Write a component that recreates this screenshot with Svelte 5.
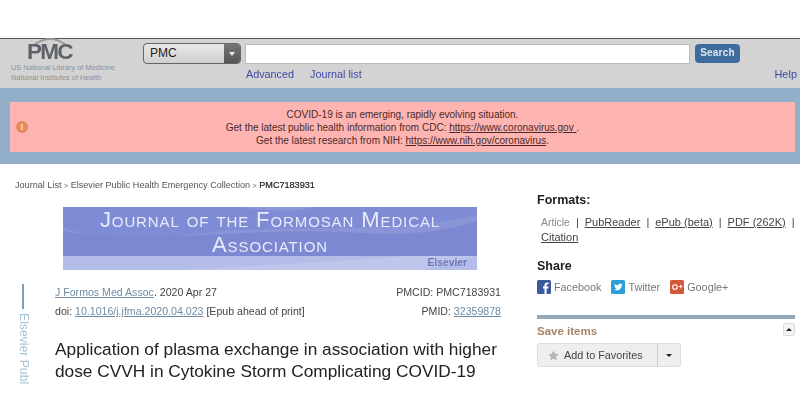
<script lang="ts">
  const formats = ["PubReader", "ePub (beta)", "PDF (262K)"];
</script>

<div class="page">
  <header class="topbar">
    <div class="brand">
      <div class="logo">
        <svg class="roof" width="44" height="12" viewBox="0 0 44 12" aria-hidden="true">
          <path d="M7 6 Q15 1 22 1 Q29 1 37 6" fill="none" stroke="#999" stroke-width="2" />
        </svg>
        <span class="logo-text">PMC</span>
      </div>
      <div class="nlm">US National Library of Medicine</div>
      <div class="nlm">National Institutes of Health</div>
    </div>
    <div class="search">
      <div class="search-row">
        <div class="select">
          <span class="select-label">PMC</span>
          <span class="select-arrow"><i></i></span>
        </div>
        <div class="input"></div>
        <div class="search-btn">Search</div>
      </div>
      <div class="links">
        <span>Advanced</span>
        <span>Journal list</span>
      </div>
    </div>
    <div class="help">Help</div>
  </header>

  <section class="band">
    <div class="alert">
      <span class="alert-icon">!</span>
      <div class="alert-text">
        <div>COVID-19 is an emerging, rapidly evolving situation.</div>
        <div>Get the latest public health information from CDC: <u>https://www.coronavirus.gov&nbsp;</u>.</div>
        <div>Get the latest research from NIH: <u>https://www.nih.gov/coronavirus</u>.</div>
      </div>
    </div>
  </section>

  <main class="content">
    <div class="left">
      <div class="crumbs">Journal List <small>&gt;</small> Elsevier Public Health Emergency Collection <small>&gt;</small> <b>PMC7183931</b></div>
      <div class="banner">
        <svg class="swoosh" viewBox="0 0 414 63" preserveAspectRatio="none" aria-hidden="true">
          <path d="M0 0 H414 V8 C320 30 200 14 110 30 C70 36 30 32 0 20 Z" fill="#7f8bd4" />
          <path d="M0 24 C80 40 190 18 300 26 C350 30 390 22 414 14 V49 H0 Z" fill="#7d88d2" />
          <path d="M180 0 C210 6 240 4 250 0 Z" fill="#8c97da" />
          <path d="M0 49 H414 V63 H0 Z" fill="#b4bce8" />
          <path d="M120 63 C200 58 290 54 340 49 H414 L360 63 Z" fill="#bfc6ec" />
        </svg>
        <div class="banner-title">Journal of the Formosan Medical<br />Association</div>
        <div class="banner-pub">Elsevier</div>
      </div>
      <div class="article">
        <aside class="side">
          <span class="side-bar"></span>
          <span class="side-text">Elsevier Publ</span>
        </aside>
        <div class="body">
          <div class="meta">
            <div><u>J Formos Med Assoc</u>. 2020 Apr 27</div>
            <div>PMCID: PMC7183931</div>
          </div>
          <div class="meta">
            <div>doi: <u>10.1016/j.jfma.2020.04.023</u> [Epub ahead of print]</div>
            <div>PMID: <u>32359878</u></div>
          </div>
          <h1>Application of plasma exchange in association with higher dose CVVH in Cytokine Storm Complicating COVID-19</h1>
        </div>
      </div>
    </div>

    <div class="right">
      <h2>Formats:</h2>
      <div class="formats">
        <span class="current">Article</span><span class="sep">|</span>{#each formats as label}<u>{label}</u><span class="sep">|</span>{/each}<br /><u>Citation</u>
      </div>
      <h2 class="share-title">Share</h2>
      <div class="share">
        <span class="share-item">
          <svg width="14" height="14" viewBox="0 0 14 14" aria-hidden="true">
            <rect width="14" height="14" rx="1.5" fill="#3a5a9b" />
            <path d="M9.6 14V8.6h1.6l.3-2H9.6V5.3c0-.6.2-1 1-1h1V2.5c-.3 0-.9-.1-1.5-.1-1.6 0-2.6 1-2.6 2.7v1.500H6v2h1.500V14z" fill="#fff" />
          </svg>
          Facebook
        </span>
        <span class="share-item">
          <svg width="14" height="14" viewBox="0 0 14 14" aria-hidden="true">
            <rect width="14" height="14" rx="1.5" fill="#2b9fd6" />
            <path d="M11.5 4.2c-.3.2-.7.3-1 .3.4-.2.6-.5.8-.9-.3.2-.7.3-1.1.4a1.700 1.700 0 0 0-2.900 1.500C5.900 5.400 4.700 4.800 3.800 3.800c-.5.8-.2 1.800.5 2.300-.3 0-.5-.1-.8-.2 0 .8.6 1.500 1.400 1.700-.3.1-.5.1-.8 0 .2.7.9 1.200 1.600 1.200-.7.5-1.600.8-2.500.7.8.5 1.700.8 2.600.8 3.200 0 5-2.700 4.900-5.100.3-.3.6-.6.8-1z" fill="#fff" />
          </svg>
          Twitter
        </span>
        <span class="share-item">
          <svg width="14" height="14" viewBox="0 0 14 14" aria-hidden="true">
            <rect width="14" height="14" rx="1.5" fill="#d4573a" />
            <circle cx="5" cy="7" r="2.3" fill="none" stroke="#fff" stroke-width="1.1" />
            <path d="M9 6.5h3.500M10.750 4.700v3.600" stroke="#fff" stroke-width="1" />
          </svg>
          Google+
        </span>
      </div>
      <div class="save">
        <div class="save-head">
          <span class="save-title">Save items</span>
          <span class="collapse"><i></i></span>
        </div>
        <div class="fav">
          <span class="fav-main">
            <svg width="11" height="11" viewBox="0 0 24 24" aria-hidden="true">
              <path d="M12 1l3.400 7.400 8 .9-6 5.400 1.700 8L12 18.700 4.900 22.700l1.700-8-6-5.400 8-.9z" fill="#b5b5b5" />
            </svg>
            Add to Favorites
          </span>
          <span class="fav-more"><i></i></span>
        </div>
      </div>
    </div>
  </main>
</div>

<style>
  :global(body) {
    margin: 0;
    background: #fff;
  }

  .page {
    width: 800px;
    height: 420px;
    overflow: hidden;
    padding-top: 38px;
    box-sizing: border-box;
    font-family: "Liberation Sans", Arial, sans-serif;
    color: #333;
    filter: blur(0.55px);
  }

  .topbar {
    display: flex;
    height: 50px;
    box-sizing: border-box;
    border-top: 1px solid #555;
    background: #d3d3d3;
  }

  .brand {
    width: 143px;
    padding-left: 11px;
    box-sizing: border-box;
    flex: none;
  }

  .logo {
    position: relative;
    width: 46px;
    margin-left: 16px;
    height: 24px;
  }

  .roof {
    position: absolute;
    left: 1px;
    top: -1px;
  }

  .logo-text {
    position: absolute;
    left: 0;
    top: 2px;
    font-size: 22.5px;
    line-height: 22px;
    font-weight: 700;
    letter-spacing: -1.7px;
    color: #5f6268;
  }

  .nlm {
    font-size: 7.4px;
    line-height: 10px;
    color: #8d9097;
    white-space: nowrap;
  }

  .search {
    flex: none;
    width: 600px;
  }

  .search-row {
    display: flex;
    align-items: center;
    padding-top: 4px;
    height: 21px;
  }

  .select {
    display: flex;
    width: 98px;
    height: 21px;
    box-sizing: border-box;
    border: 1px solid #666;
    border-radius: 4px;
    overflow: hidden;
    background: linear-gradient(#e8e8e8, #d0d0d0);
  }

  .select-label {
    flex: 1;
    padding-left: 6px;
    font-size: 12px;
    line-height: 19px;
    color: #222;
  }

  .select-arrow {
    display: flex;
    align-items: center;
    justify-content: center;
    width: 16px;
    background: linear-gradient(#777, #555);
  }

  .select-arrow i {
    border: 3px solid transparent;
    border-top: 4px solid #eee;
    border-bottom: 0;
  }

  .input {
    width: 445px;
    height: 20px;
    margin-left: 4px;
    border: 1px solid #bbb;
    background: #fff;
    box-sizing: border-box;
  }

  .search-btn {
    width: 45px;
    height: 19px;
    margin-left: 5px;
    border-radius: 4px;
    background: #3f6c9f;
    color: #dfe8f0;
    font-size: 10px;
    font-weight: 700;
    line-height: 18px;
    text-align: center;
    letter-spacing: 0.2px;
  }

  .links {
    display: flex;
    gap: 16px;
    padding: 4px 0 0 103px;
    font-size: 10.8px;
    line-height: 13px;
    color: #3d4aa5;
  }

  .help {
    margin-left: auto;
    padding: 28px 3px 0 0;
    font-size: 11px;
    line-height: 14px;
    color: #3d4aa5;
  }

  .band {
    height: 76px;
    padding: 14px 5px 12px 10px;
    box-sizing: border-box;
    background: #93aec9;
  }

  .alert {
    position: relative;
    height: 50px;
    background: #feb4b0;
    font-size: 10px;
    line-height: 13px;
    color: #4b2a2a;
    text-align: center;
    display: flex;
    align-items: center;
    justify-content: center;
  }

  .alert-text {
    width: 100%;
  }

  .alert-icon {
    position: absolute;
    left: 6px;
    top: 19px;
    width: 12px;
    height: 12px;
    border-radius: 50%;
    background: #e58a5c;
    color: #fbe6da;
    font-size: 9px;
    line-height: 12px;
    font-weight: 700;
    text-align: center;
  }

  .content {
    display: flex;
  }

  .left {
    width: 537px;
    flex: none;
  }

  .crumbs {
    padding: 15px 0 0 15px;
    font-size: 9.1px;
    line-height: 12px;
    color: #555;
    white-space: nowrap;
  }

  .crumbs small {
    font-size: 7px;
  }

  .crumbs b {
    font-weight: 400;
    color: #222;
    -webkit-text-stroke: 0.2px #222;
  }

  .banner {
    position: relative;
    width: 414px;
    height: 63px;
    margin: 15px 0 0 63px;
    background: #8a95d8;
    overflow: hidden;
    color: #e8ebfa;
  }

  .swoosh {
    position: absolute;
    inset: 0;
    width: 100%;
    height: 100%;
  }

  .banner-title {
    position: relative;
    font-size: 22px;
    line-height: 25px;
    font-variant: small-caps;
    text-align: center;
    letter-spacing: 0.9px;
    white-space: nowrap;
  }

  .banner-pub {
    position: absolute;
    right: 10px;
    bottom: 2px;
    font-size: 10.3px;
    line-height: 11px;
    font-weight: 700;
    color: #6f79b8;
  }

  .article {
    display: flex;
    padding-top: 13px;
  }

  .side {
    width: 55px;
    flex: none;
    display: flex;
    flex-direction: column;
    align-items: flex-start;
    padding: 1px 0 0 22px;
    box-sizing: border-box;
  }

  .side-bar {
    width: 2px;
    height: 25px;
    background: #7d9fba;
  }

  .side-text {
    margin: 4px 0 0 -3px;
    writing-mode: vertical-rl;
    font-size: 12.2px;
    line-height: 10px;
    color: #a9c4d4;
    white-space: nowrap;
  }

  .body {
    width: 446px;
    flex: none;
  }

  .meta {
    display: flex;
    justify-content: space-between;
    font-size: 10.6px;
    line-height: 19px;
    color: #444;
    white-space: nowrap;
  }

  .meta u {
    color: #6f8ba3;
  }

  h1 {
    margin: 17px 0 0;
    font-size: 17.3px;
    line-height: 22px;
    font-weight: 400;
    color: #222;
  }

  .right {
    flex: 1;
    min-width: 0;
    padding-top: 28px;
  }

  h2 {
    margin: 0;
    font-size: 12.5px;
    line-height: 17px;
    font-weight: 700;
    color: #222;
  }

  .formats {
    margin-top: 6px;
    padding-left: 4px;
    font-size: 11px;
    line-height: 15px;
    color: #444;
    white-space: nowrap;
  }

  .current {
    font-size: 10.4px;
    color: #888;
  }

  .sep {
    margin: 0 6px;
  }

  .share-title {
    margin-top: 13px;
  }

  .share {
    display: flex;
    gap: 10px;
    margin-top: 5px;
    font-size: 10.8px;
    line-height: 14px;
    color: #777;
  }

  .share-item {
    display: flex;
    align-items: center;
    gap: 3px;
  }

  .save {
    margin: 21px 5px 0 0;
    border-top: 4px solid #93a9bb;
  }

  .save-head {
    display: flex;
    justify-content: space-between;
    align-items: center;
    padding-top: 6px;
  }

  .save-title {
    font-size: 11.5px;
    line-height: 13px;
    font-weight: 700;
    color: #a5846a;
  }

  .collapse {
    display: flex;
    align-items: center;
    justify-content: center;
    width: 10px;
    height: 11px;
    margin-top: -4px;
    border: 1px solid #ddd;
    border-radius: 2px;
    background: #f3f3f3;
  }

  .collapse i {
    border: 3px solid transparent;
    border-bottom: 3px solid #222;
    border-top: 0;
  }

  .fav {
    display: flex;
    width: 144px;
    height: 24px;
    margin-top: 5px;
    border: 1px solid #ddd;
    border-radius: 3px;
    box-sizing: border-box;
    background: #eee;
  }

  .fav-main {
    display: flex;
    align-items: center;
    gap: 5px;
    width: 120px;
    padding-left: 10px;
    box-sizing: border-box;
    border-right: 1px solid #ccc;
    font-size: 10.8px;
    color: #444;
  }

  .fav-more {
    flex: 1;
    display: flex;
    align-items: center;
    justify-content: center;
  }

  .fav-more i {
    border: 3px solid transparent;
    border-top: 3px solid #222;
    border-bottom: 0;
  }
</style>
